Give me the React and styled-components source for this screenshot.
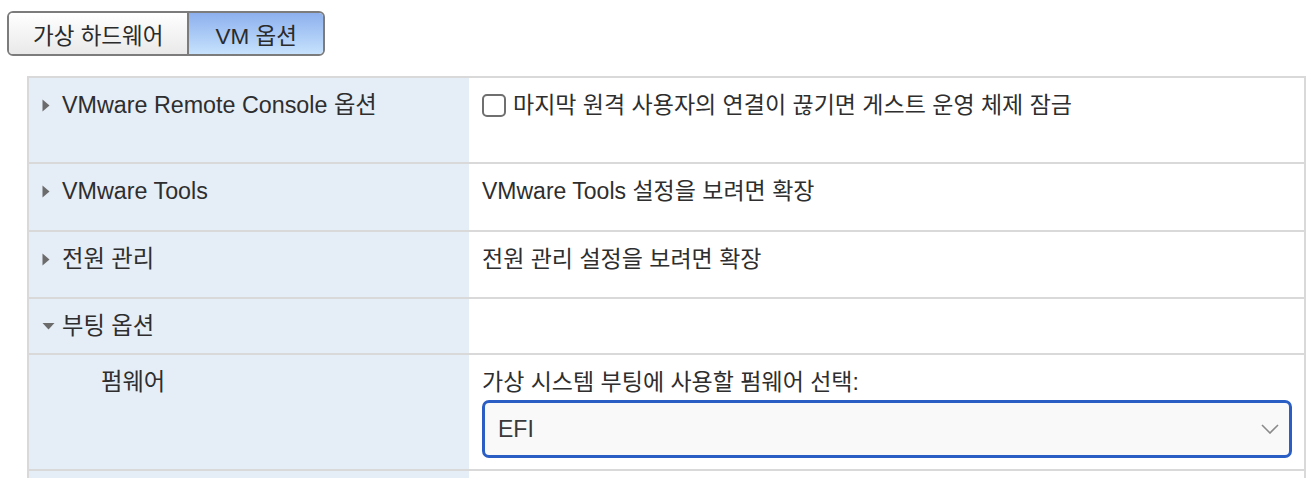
import React, {useState} from "react"
import styled, {createGlobalStyle} from "styled-components"

const GlobalStyle = createGlobalStyle`
  body {
    margin: 0;
    background: #ffffff;
    font-family: "Liberation Sans", "Noto Sans CJK KR", sans-serif;
    color: #333333;
  }
`

const Page = styled.div`
  padding: 11px 8px 0 7px;
`

const TabBar = styled.div`
  display: inline-flex;
  border: 2px solid #7c7c7c;
  border-radius: 6px;
  overflow: hidden;
  height: 41px;
`

const Tab = styled.button`
  border: none;
  margin: 0;
  padding: 0 ${p => p.active ? 26 : 24}px;
  font-family: inherit;
  font-size: 22.5px;
  color: #2b2b2b;
  cursor: pointer;
  background: ${p => p.active
    ? "linear-gradient(#8db0ee, #c6e2fd)"
    : "linear-gradient(#ffffff, #e9e9e9)"};
  & + & {
    border-left: 2px solid #7c7c7c;
  }
`

const Table = styled.div`
  margin: 20px 0 0 20px;
  border-top: 2px solid #d9d9d9;
  border-left: 2px solid #d9d9d9;
  border-right: 2px solid #d9d9d9;
`

const Row = styled.div`
  display: grid;
  grid-template-columns: 440px 1fr;
  height: ${p => p.h}px;
  & + & {
    border-top: 2px solid #d9d9d9;
  }
`

const Label = styled.div`
  background: #e5edf6;
  display: flex;
  align-items: flex-start;
  padding: ${p => p.sub ? "15px 0 0 72px" : "15px 0 0 12px"};
  font-size: 23.3px;
  line-height: 24px;
  color: #2e2e2e;
`

const Arrow = styled.span`
  width: 20px;
  height: 24px;
  display: flex;
  align-items: center;
  padding-left: 1px;
  svg { display: block; }
`

const Value = styled.div`
  padding: 15px 12px 0 13px;
  font-size: 23px;
  line-height: 24px;
  color: #2e2e2e;
`

const CheckLine = styled.label`
  display: flex;
  align-items: center;
  gap: 7px;
`

const Box = styled.span`
  width: 24px;
  height: 23px;
  flex: none;
  border: 2px solid #6f6f6f;
  border-radius: 5px;
  background: #fff;
  box-sizing: border-box;
`

const SelectBox = styled.div`
  margin-top: 6px;
  height: 58px;
  box-sizing: border-box;
  border: 3px solid #2a5ec5;
  border-radius: 7px;
  background: #f9f9f9;
  display: flex;
  align-items: center;
  justify-content: space-between;
  padding: 0 10px 0 13px;
  font-size: 23px;
  color: #3a3a3a;
`

const Caret = ({open}) => (
  <Arrow>
    {open ? (
      <svg width="13" height="8" viewBox="0 0 13 8"><path d="M0.5 1 L12.5 1 L6.5 7.5 Z" fill="#6b6b6b" /></svg>
    ) : (
      <svg width="8" height="13" viewBox="0 0 8 13"><path d="M0.5 0.5 L7.5 6.5 L0.5 12.5 Z" fill="#6b6b6b" /></svg>
    )}
  </Arrow>
)

const App = () => {
  const [firmware] = useState("EFI")

  return (
    <Page>
      <GlobalStyle />
      <TabBar>
        <Tab>가상 하드웨어</Tab>
        <Tab active>VM 옵션</Tab>
      </TabBar>
      <Table>
        <Row h={84}>
          <Label><Caret />VMware Remote Console 옵션</Label>
          <Value>
            <CheckLine><Box />마지막 원격 사용자의 연결이 끊기면 게스트 운영 체제 잠금</CheckLine>
          </Value>
        </Row>
        <Row h={66}>
          <Label><Caret />VMware Tools</Label>
          <Value>VMware Tools 설정을 보려면 확장</Value>
        </Row>
        <Row h={65}>
          <Label><Caret />전원 관리</Label>
          <Value>전원 관리 설정을 보려면 확장</Value>
        </Row>
        <Row h={54}>
          <Label><Caret open />부팅 옵션</Label>
          <Value />
        </Row>
        <Row h={114}>
          <Label sub>펌웨어</Label>
          <Value>
            가상 시스템 부팅에 사용할 펌웨어 선택:
            <SelectBox>
              {firmware}
              <svg width="18" height="10" viewBox="0 0 18 10"><path d="M1 1 L9 9 L17 1" fill="none" stroke="#8a8a8a" strokeWidth="1.6" /></svg>
            </SelectBox>
          </Value>
        </Row>
        <Row h={20}>
          <Label />
          <Value />
        </Row>
      </Table>
    </Page>
  )
}

export default App
